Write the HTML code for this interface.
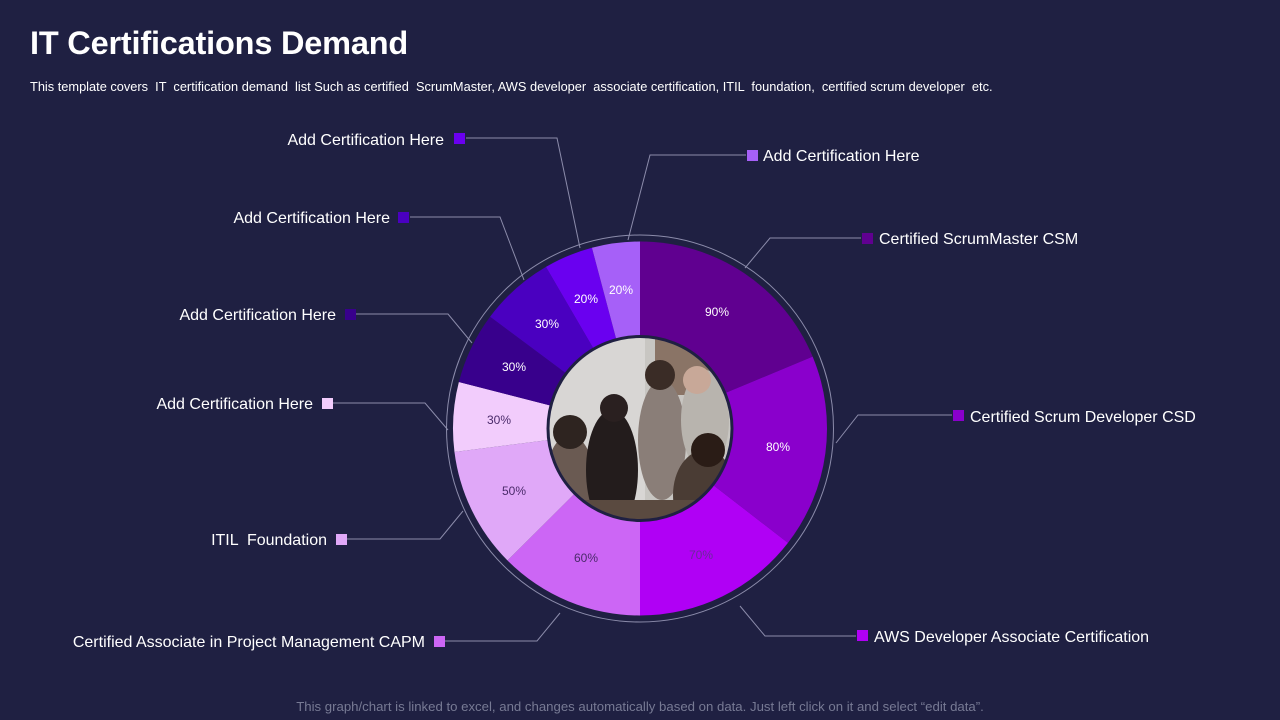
<!DOCTYPE html>
<html><head><meta charset="utf-8"><style>
html,body{margin:0;padding:0;background:#1f2042;width:1280px;height:720px;overflow:hidden;font-family:"Liberation Sans",sans-serif;color:#fff}
.t{position:absolute;left:30px;top:25px;font-size:32.5px;font-weight:bold;letter-spacing:-0.2px}
.s{position:absolute;left:30px;top:79px;font-size:12.8px}
.f{position:absolute;left:0;width:1280px;text-align:center;top:699px;font-size:13.2px;color:#777a94}
</style></head><body>
<div class="t">IT Certifications Demand</div>
<div class="s">This template covers &nbsp;IT &nbsp;certification demand &nbsp;list Such as certified &nbsp;ScrumMaster, AWS developer &nbsp;associate certification, ITIL &nbsp;foundation, &nbsp;certified scrum developer &nbsp;etc.</div>
<svg width="1280" height="720" style="position:absolute;left:0;top:0" font-family="Liberation Sans, sans-serif">
<defs>
<clipPath id="cc"><circle cx="640" cy="428.5" r="91"/></clipPath>
</defs>
<circle cx="640" cy="428.5" r="193.5" fill="none" stroke="#8c8cab" stroke-width="1"/>
<g id="pie"></g>
<circle cx="640" cy="428.5" r="93" fill="#1f2042"/>
<g clip-path="url(#cc)">
<rect x="545" y="335" width="190" height="190" fill="#c8c6c2"/>
<rect x="545" y="335" width="100" height="190" fill="#d8d6d4"/>
<rect x="655" y="335" width="80" height="60" fill="#8a7466"/>
<ellipse cx="570" cy="485" rx="25" ry="50" fill="#6a5a52"/>
<circle cx="570" cy="432" r="17" fill="#2e2420"/>
<ellipse cx="612" cy="470" rx="26" ry="60" fill="#231c1c"/>
<circle cx="614" cy="408" r="14" fill="#2a2020"/>
<ellipse cx="662" cy="440" rx="24" ry="60" fill="#8a7e78"/>
<circle cx="660" cy="375" r="15" fill="#3a2c26"/>
<ellipse cx="705" cy="420" rx="24" ry="50" fill="#b8b4ae"/>
<circle cx="697" cy="380" r="14" fill="#c8a898"/>
<ellipse cx="705" cy="495" rx="32" ry="45" fill="#4a3c34"/>
<circle cx="708" cy="450" r="17" fill="#2a1c16"/>
<rect x="545" y="500" width="190" height="30" fill="#5a4a40"/>
</g>
<circle cx="640" cy="428.5" r="92" fill="none" stroke="#1f2042" stroke-width="3"/>
<g fill="none" stroke="#8c8cab" stroke-width="1">
<polyline points="466,138 557,138 580,248"/>
<polyline points="746,155 650,155 628,240"/>
<polyline points="861,238 770,238 745,268"/>
<polyline points="952,415 858,415 836,443"/>
<polyline points="856,636 765,636 740,606"/>
<polyline points="445,641 537,641 560,613"/>
<polyline points="347,539 440,539 463,511"/>
<polyline points="333,403 425,403 448,430"/>
<polyline points="356,314 448,314 472,343"/>
<polyline points="410,217 500,217 524,280"/>
</g>
<g>
<rect x="454" y="133" width="11" height="11" fill="#6a00f0"/>
<rect x="747" y="150" width="11" height="11" fill="#a660f8"/>
<rect x="862" y="233" width="11" height="11" fill="#600090"/>
<rect x="953" y="410" width="11" height="11" fill="#8a00cc"/>
<rect x="857" y="630" width="11" height="11" fill="#b000f5"/>
<rect x="434" y="636" width="11" height="11" fill="#cc66f5"/>
<rect x="336" y="534" width="11" height="11" fill="#e0a8f8"/>
<rect x="322" y="398" width="11" height="11" fill="#f2ccfc"/>
<rect x="345" y="309" width="11" height="11" fill="#38008c"/>
<rect x="398" y="212" width="11" height="11" fill="#4a00c0"/>
</g>
<g fill="#fff" font-size="16">
<text x="444" y="145" text-anchor="end">Add Certification Here</text>
<text x="763" y="161">Add Certification Here</text>
<text x="879" y="244">Certified ScrumMaster CSM</text>
<text x="970" y="422">Certified Scrum Developer CSD</text>
<text x="874" y="642">AWS Developer Associate Certification</text>
<text x="425" y="647" text-anchor="end">Certified Associate in Project Management CAPM</text>
<text x="327" y="545" text-anchor="end">ITIL &#160;Foundation</text>
<text x="313" y="409" text-anchor="end">Add Certification Here</text>
<text x="336" y="320" text-anchor="end">Add Certification Here</text>
<text x="390" y="223" text-anchor="end">Add Certification Here</text>
</g>
<g font-size="12" text-anchor="middle">
<text x="717" y="316" fill="#fff">90%</text>
<text x="778" y="451" fill="#fff">80%</text>
<text x="701" y="559" fill="#6a2a9a">70%</text>
<text x="586" y="562" fill="#4a2a6a">60%</text>
<text x="514" y="495" fill="#4a2a6a">50%</text>
<text x="499" y="424" fill="#4a2a6a">30%</text>
<text x="514" y="371" fill="#fff">30%</text>
<text x="547" y="328" fill="#fff">30%</text>
<text x="586" y="303" fill="#fff">20%</text>
<text x="621" y="294" fill="#fff">20%</text>
</g>
</svg>
<div class="f">This graph/chart is linked to excel, and changes automatically based on data. Just left click on it and select “edit data”.</div>
<script>
(function(){var d=[0,67.4,127.7,180,225.1,262.8,284.4,306.7,329.8,345.1,360],c=["#600090","#8a00cc","#b000f5","#cc66f5","#e0a8f8","#f2ccfc","#38008c","#4a00c0","#6a00f0","#a660f8"];
var cx=640,cy=428.5,r=187,h="";
for(var i=0;i<c.length;i++){var a=d[i]*Math.PI/180,b=d[i+1]*Math.PI/180;
var x1=cx+r*Math.sin(a),y1=cy-r*Math.cos(a),x2=cx+r*Math.sin(b),y2=cy-r*Math.cos(b);
h+='<path d="M'+cx+','+cy+' L'+x1.toFixed(2)+','+y1.toFixed(2)+' A'+r+','+r+' 0 0 1 '+x2.toFixed(2)+','+y2.toFixed(2)+' Z" fill="'+c[i]+'"/>';}
document.getElementById("pie").innerHTML=h;})();
</script>
</body></html>
